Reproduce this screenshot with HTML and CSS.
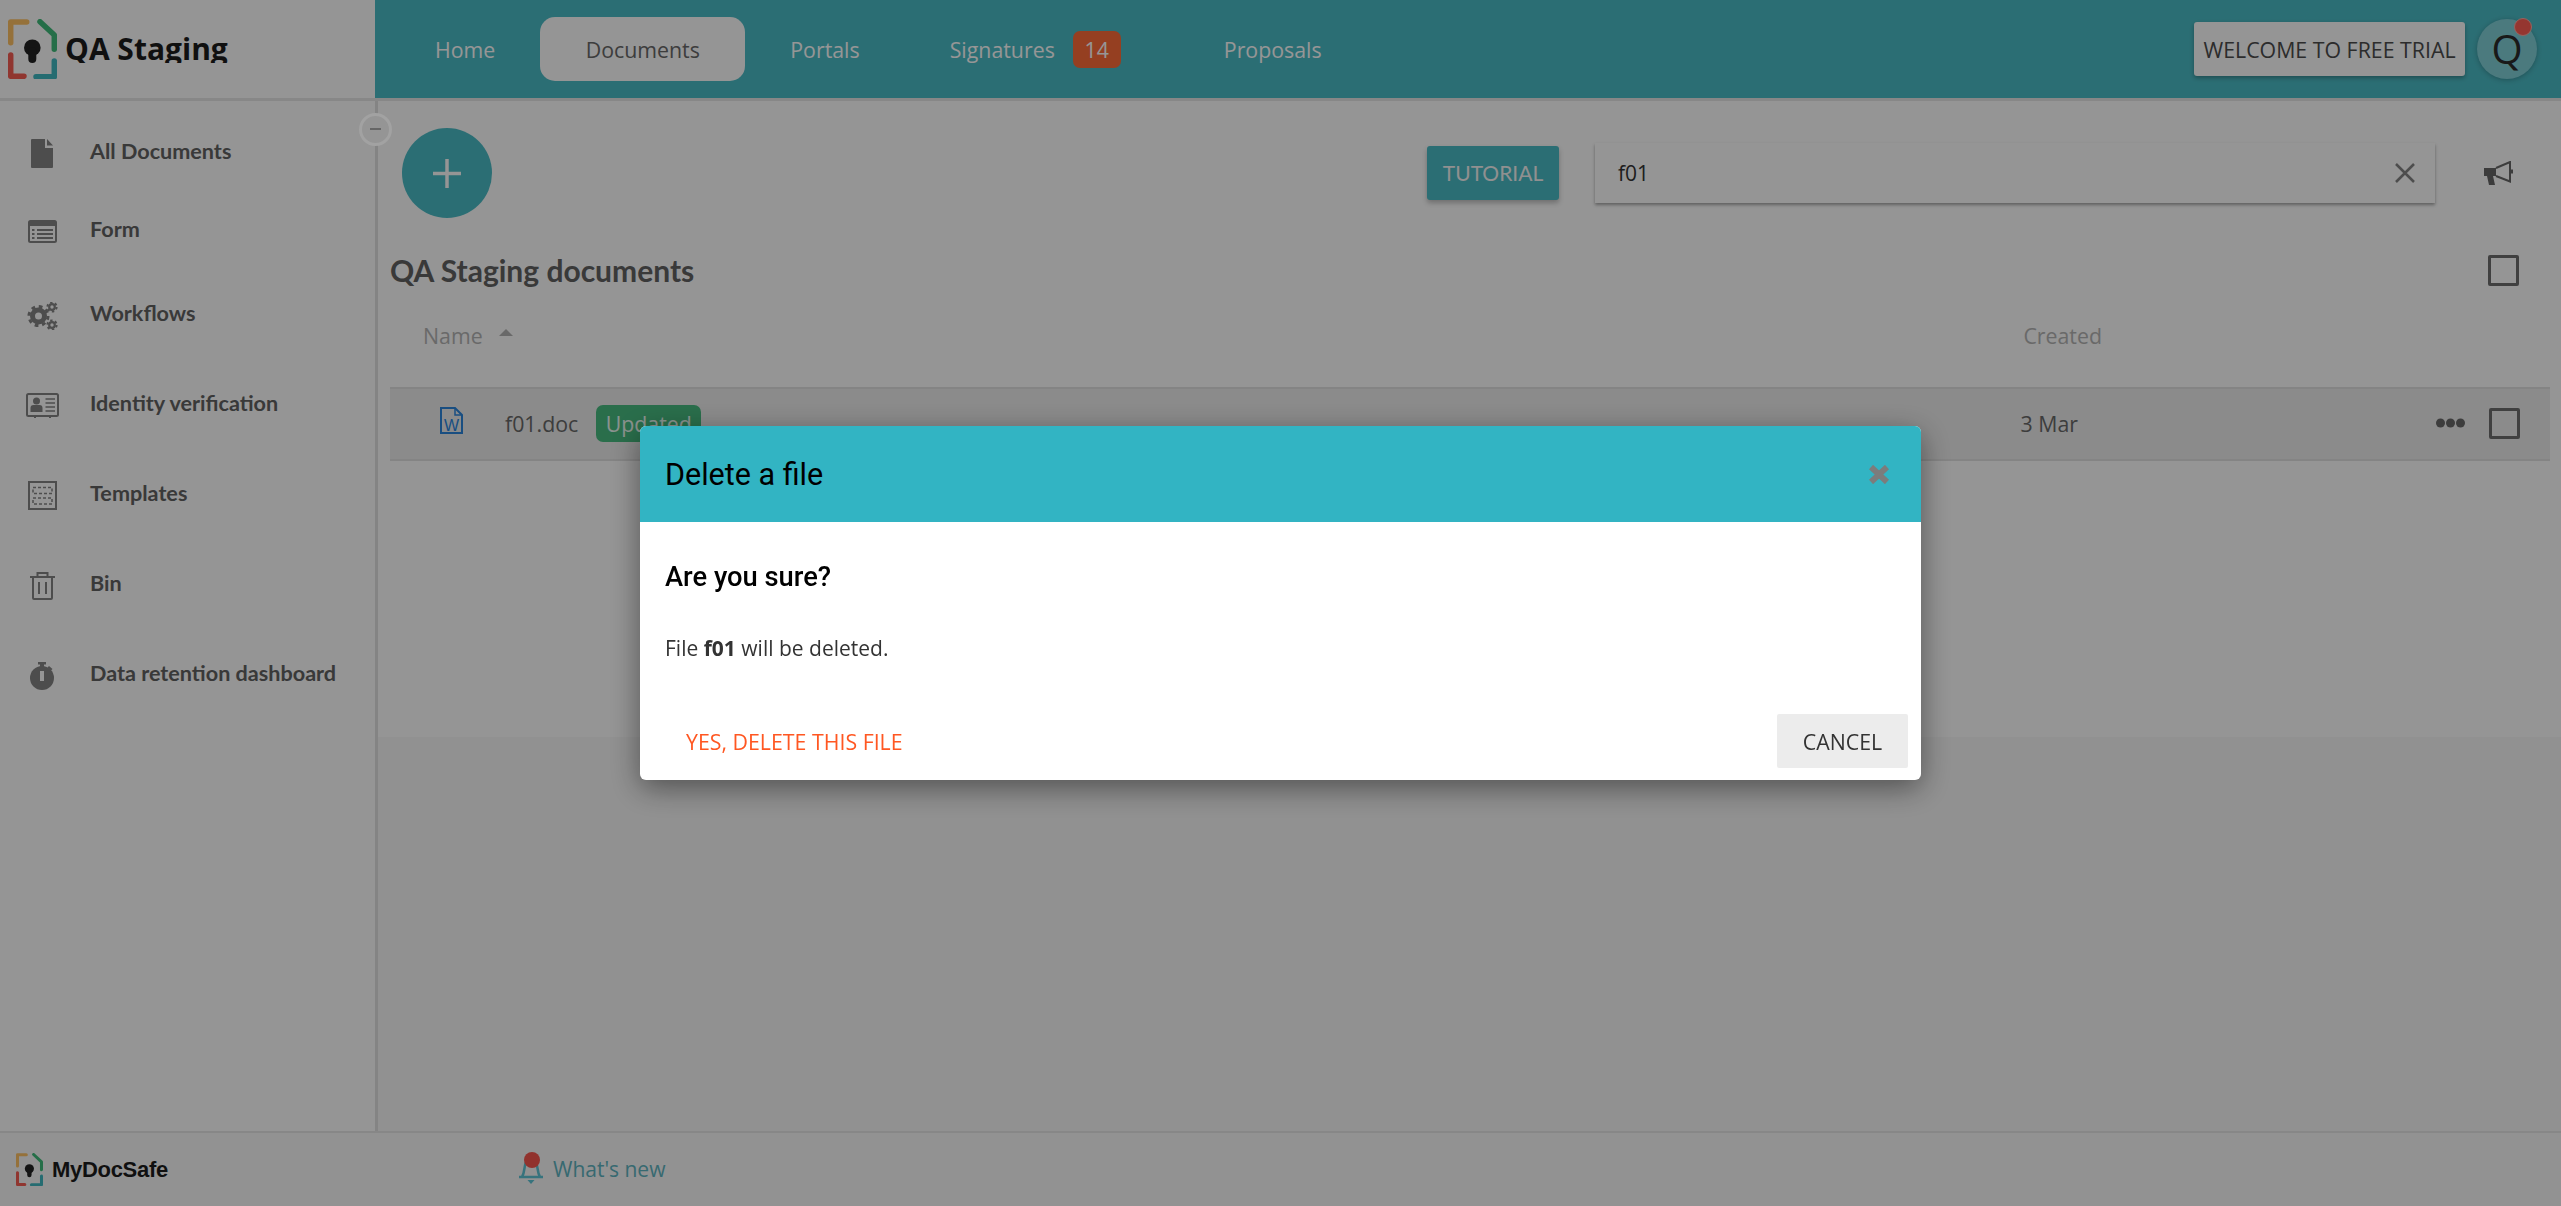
FILE: index.html
```html
<!DOCTYPE html>
<html lang="en">
<head>
<meta charset="utf-8">
<title>QA Staging documents</title>
<link rel="stylesheet" href="styles.css">
</head>
<body>
<div class="app">
  <header class="topbar">
    <div class="brand">
      <svg class="brand-logo" width="49" height="60" viewBox="0 0 49 60" fill="none" stroke-width="5.5" stroke-linecap="round" stroke-linejoin="round">
        <path d="M2.7 23.7V3H18.7" stroke="#f8bd62"/>
        <path d="M32 2.7L46.3 16V30.3" stroke="#3fb878"/>
        <path d="M2.7 36V57.3H16" stroke="#f05a50"/>
        <path d="M28 57.7H46.3V42" stroke="#3fb4bd"/>
        <circle cx="24.3" cy="28.7" r="8.3" fill="#222" stroke="none"/>
        <path d="M24.3 32V40" stroke="#222" stroke-width="8"/>
      </svg>
      <span class="brand-name">QA Staging</span>
    </div>
    <nav class="nav">
      <a class="nav-item nav-home">Home</a>
      <a class="nav-item nav-active">Documents</a>
      <a class="nav-item nav-portals">Portals</a>
      <a class="nav-item nav-signatures">Signatures</a>
      <span class="nav-badge">14</span>
      <a class="nav-item nav-proposals">Proposals</a>
      <button class="trial-btn">WELCOME TO FREE TRIAL</button>
      <div class="avatar">Q<span class="avatar-dot"></span></div>
    </nav>
  </header>

  <div class="middle">
    <aside class="sidebar">
      <span class="collapse"></span>
      <a class="side-item side-short">
        <span class="side-icon"><svg width="22" height="29" viewBox="0 0 22 29" fill="#808080"><path d="M1 0H14V9H22V28a1 1 0 0 1-1 1H1a1 1 0 0 1-1-1V1a1 1 0 0 1 1-1z"/><path d="M16 0L22 6.500H16z"/></svg></span>
        All Documents
      </a>
      <a class="side-item side-short">
        <span class="side-icon"><svg width="29" height="23" viewBox="0 0 29 23" fill="none" stroke="#808080"><rect x="1" y="1" width="27" height="21" rx="1.500" stroke-width="2"/><path d="M1 3.500H28" stroke-width="5"/><path d="M9 10H25M9 14H25M9 18H25M4 10H6.500M4 14H6.500M4 18H6.500" stroke-width="2"/></svg></span>
        Form
      </a>
      <a class="side-item">
        <span class="side-icon"><svg width="31" height="28" viewBox="0 0 31 28" fill="none" stroke="#808080"><circle cx="11.500" cy="14" r="6" stroke-width="5"/><circle cx="11.500" cy="14" r="9.500" stroke-width="3" stroke-dasharray="3.700 3.760"/><circle cx="25" cy="5" r="2.800" stroke-width="2.200"/><circle cx="25" cy="5" r="4.600" stroke-width="2" stroke-dasharray="2.400 2.420"/><circle cx="25" cy="23" r="2.800" stroke-width="2.200"/><circle cx="25" cy="23" r="4.600" stroke-width="2" stroke-dasharray="2.400 2.420"/></svg></span>
        Workflows
      </a>
      <a class="side-item">
        <span class="side-icon"><svg width="33" height="25" viewBox="0 0 33 25" fill="none" stroke="#808080"><rect x="1" y="1" width="31" height="22" rx="1.500" stroke-width="2"/><circle cx="10.500" cy="8" r="3.500" fill="#808080" stroke="none"/><path d="M4.500 19V15a3 3 0 0 1 3-3h6a3 3 0 0 1 3 3v4z" fill="#808080" stroke="none"/><path d="M19.500 6H29M19.500 10H29M19.500 14H29M19.500 18H29" stroke-width="1.500"/><path d="M9 23V25M24 23V25" stroke-width="2"/></svg></span>
        Identity verification
      </a>
      <a class="side-item">
        <span class="side-icon"><svg width="29" height="29" viewBox="0 0 29 29" fill="none" stroke="#808080"><rect x="1" y="1" width="27" height="27" stroke-width="2"/><rect x="5" y="6.500" width="19" height="6" stroke-width="1.500" stroke-dasharray="3 2"/><rect x="5" y="17" width="19" height="6" stroke-width="1.500" stroke-dasharray="3 2"/></svg></span>
        Templates
      </a>
      <a class="side-item">
        <span class="side-icon"><svg width="25" height="28" viewBox="0 0 25 28" fill="none" stroke="#808080" stroke-width="2"><path d="M3 5V26a1 1 0 0 0 1 1H21a1 1 0 0 0 1-1V5"/><path d="M0 5H25"/><path d="M7.500 4V1H17.500V4"/><path d="M9 10V22M16 10V22"/></svg></span>
        Bin
      </a>
      <a class="side-item">
        <span class="side-icon"><svg width="24" height="28" viewBox="0 0 24 28" fill="#808080"><circle cx="12" cy="16" r="12"/><path d="M8 0H16V2.500H14V5H10V2.500H8z"/><path d="M19 4L22.500 7L21 8.500L17.500 5.500z"/><rect x="10" y="9" width="4" height="10" fill="#f8f8f8"/></svg></span>
        Data retention dashboard
      </a>
    </aside>

    <main class="main">
      <div class="toolbar">
        <button class="add-btn" aria-label="Add"><svg width="28" height="29" viewBox="0 0 28 29" stroke="#f8f8f8" stroke-width="3.500"><path d="M14 0V29M0 14.500H28"/></svg></button>
        <button class="tutorial-btn">TUTORIAL</button>
        <div class="search">
          <span class="search-value">f01</span>
          <svg width="20" height="20" viewBox="0 0 20 20" stroke="#808080" stroke-width="2.500"><path d="M1 1L19 19M19 1L1 19"/></svg>
        </div>
        <svg class="megaphone" width="29" height="25" viewBox="0 0 29 25" fill="none"><path d="M0 7H12V15H9L11 24H5L3 15H0z" fill="#646464"/><path d="M12 7L26 1V20.500L12 15" stroke="#646464" stroke-width="2"/><rect x="26" y="8.500" width="3" height="4" fill="#646464"/></svg>
      </div>

      <section class="docs">
        <div class="docs-title">
          <h1>QA Staging documents</h1>
          <span class="check"></span>
        </div>
        <div class="table-head">
          <span class="th-name">Name</span>
          <span class="sort-caret"></span>
          <span class="th-created">Created</span>
        </div>
        <div class="row">
          <svg class="word-icon" width="23" height="27" viewBox="0 0 23 27" fill="none" stroke="#2a82d8" stroke-width="2"><path d="M1 1H15L22 8V26H1z"/><path d="M15 1V8H22" stroke-width="1.500"/><text x="11.500" y="23.500" text-anchor="middle" class="word-letter">W</text></svg>
          <span class="file-name">f01.doc</span>
          <span class="file-badge">Updated</span>
          <span class="file-date">3 Mar</span>
          <svg class="dots" width="29" height="10" viewBox="0 0 29 10" fill="#666"><circle cx="4.500" cy="5" r="4.500"/><circle cx="14.500" cy="5" r="4.500"/><circle cx="24.500" cy="5" r="4.500"/></svg>
          <span class="check check-row"></span>
        </div>
      </section>
      <div class="lower"></div>
    </main>
  </div>

  <footer class="footer">
    <svg width="27" height="33" viewBox="0 0 49 60" fill="none" stroke-width="5.500" stroke-linecap="round" stroke-linejoin="round">
      <path d="M2.700 23.700V3H18.700" stroke="#f8bd62"/>
      <path d="M32 2.700L46.300 16V30.300" stroke="#3fb878"/>
      <path d="M2.700 36V57.300H16" stroke="#f05a50"/>
      <path d="M28 57.700H46.300V42" stroke="#3fb4bd"/>
      <circle cx="24.300" cy="28.700" r="8.300" fill="#222" stroke="none"/>
      <path d="M24.300 32V40" stroke="#222" stroke-width="8"/>
    </svg>
    <span class="footer-name">MyDocSafe</span>
    <svg class="bell" width="26" height="33" viewBox="0 0 26 33" fill="none"><path d="M1 25H25M4 25C7 20 6 14 8 10C9 8 11 7 13 7C15 7 17 8 18 10C20 14 19 20 22 25" stroke="#5cc0d0" stroke-width="2.500"/><path d="M9.500 28H16.500L13 32z" fill="#5cc0d0"/><circle cx="14" cy="8" r="8" fill="#f2544c"/></svg>
    <span class="whats-new">What's new</span>
  </footer>
</div>

<div class="backdrop"></div>

<div class="modal" role="dialog">
  <div class="modal-head">
    <h2>Delete a file</h2>
    <svg width="20" height="19" viewBox="0 0 20 19" stroke="#7c7c7c" stroke-width="6"><path d="M2 2L18 17M18 2L2 17"/></svg>
  </div>
  <div class="modal-body">
    <h3>Are you sure?</h3>
    <p>File <strong>f01</strong> will be deleted.</p>
  </div>
  <div class="modal-foot">
    <button class="btn-delete">YES, DELETE THIS FILE</button>
    <button class="btn-cancel">CANCEL</button>
  </div>
</div>
</body>
</html>
```
FILE: styles.css
```css
* { box-sizing: border-box; }
html, body { margin: 0; height: 100%; overflow: hidden; }
body { font-family: "Open Sans", sans-serif; font-size: 21.33px; color: #555; background: #f8f8f8; }
button { font: inherit; border: 0; padding: 0; cursor: pointer; }
h1, h2, h3, p { margin: 0; font-weight: normal; }

.app { height: 1206px; display: flex; flex-direction: column; }

/* Top bar */
.topbar { flex: 0 0 101px; display: flex; border-bottom: 3px solid #e2e2e2; background: #f8f8f8; }
.brand { flex: 0 0 375px; display: flex; align-items: center; padding-left: 8px; gap: 8px; }
.brand-name { font-weight: 700; font-size: 30px; line-height: 40px; height: 34px; overflow: hidden; color: #1c1c1c; margin-bottom: 6px; white-space: nowrap; }
.nav { flex: 1; display: flex; align-items: center; background: #49b7c1; color: #fafafa; padding-right: 24px; }
.nav-item { white-space: nowrap; line-height: 27px; }
.nav-home { margin-left: 60px; }
.nav-active { margin-left: 45px; width: 205px; height: 64px; border-radius: 15px; background: #f8f8f8; color: #666; display: flex; align-items: center; justify-content: center; }
.nav-portals { margin-left: 45px; }
.nav-signatures { margin-left: 90px; }
.nav-badge { margin-left: 18px; width: 48px; height: 37px; border-radius: 7px; background: #f86a38; color: #fafafa; display: flex; align-items: center; justify-content: center; }
.nav-proposals { margin-left: 103px; }
.trial-btn { margin-left: auto; width: 271px; height: 54px; border-radius: 3px; background: #f8f8f8; color: #4a4a4a; box-shadow: 0 2px 4px rgba(0,0,0,.3); white-space: nowrap; }
.avatar { position: relative; margin-left: 12px; width: 60px; height: 60px; border-radius: 50%; background: #7dcbd3; color: #2a2a2a; font-size: 40px; line-height: 60px; text-align: center; box-shadow: 0 1px 5px rgba(0,0,0,.25); }
.avatar-dot { position: absolute; top: -1px; right: 5px; width: 18px; height: 18px; border-radius: 50%; background: #f85a50; border: 1px solid #f8a8a0; }

/* Middle */
.middle { flex: 1; display: flex; min-height: 0; }
.sidebar { position: relative; flex: 0 0 378px; padding-top: 11px; border-right: 3px solid #dcdcdc; background: #f8f8f8; }
.collapse { position: absolute; z-index: 11; top: 112px; right: -17px; width: 33px; height: 33px; border-radius: 50%; border: 3px solid #a2a2a2; background: #959595; margin-top: -100px; }
.collapse::after { content: ""; position: absolute; left: 8px; top: 12px; width: 11px; height: 2px; background: #666; }
.side-item { display: flex; align-items: center; height: 90px; font-family: Lato, sans-serif; font-weight: 700; font-size: 21.6px; color: #606060; }
.side-short { height: 78px; }
.side-icon { flex: 0 0 90px; display: flex; justify-content: center; padding-right: 6px; margin-top: 5px; }
.side-icon svg { display: block; }

/* Main */
.main { flex: 1; display: flex; flex-direction: column; min-width: 0; background: #f8f8f8; }
.toolbar { display: flex; align-items: center; padding: 27px 48px 0 24px; }
.add-btn { width: 90px; height: 90px; border-radius: 50%; background: #49b7c1; display: flex; align-items: center; justify-content: center; }
.tutorial-btn { margin-left: auto; width: 132px; height: 54px; padding-bottom: 2px; border-radius: 3px; background: #49b7c1; color: #f0f0f0; font-family: Lato, sans-serif; font-size: 21px; box-shadow: 0 3px 5px rgba(0,0,0,.25); }
.search { margin-left: 36px; width: 840px; height: 60px; display: flex; align-items: center; justify-content: space-between; padding: 0 20px 0 23px; background: #f8f8f8; box-shadow: 0 2px 3px rgba(0,0,0,.35); }
.search-value { color: #333; font-size: 21px; }
.megaphone { margin-left: 49px; }

.docs { padding: 32px 11px 0 12px; }
.docs-title { display: flex; align-items: center; justify-content: space-between; height: 40px; }
.docs-title h1 { font-family: Lato, sans-serif; font-weight: 700; font-size: 30px; color: #606060; }
.check { width: 31px; height: 31px; border: 3px solid #6c6c6c; border-radius: 2px; margin-right: 31px; }
.check-row { margin: 0 0 0 24px; }
.table-head { display: flex; align-items: center; height: 97px; padding: 0 0 6px 33px; color: #b0b0b0; }
.sort-caret { margin: 0 0 6px 16px; border: 7px solid transparent; border-top: 0; border-bottom: 7px solid #b0b0b0; }
.th-created { margin-left: auto; margin-right: 448px; }
.row { display: flex; align-items: center; height: 74px; padding: 0 30px 2px 50px; background: #e8e8e8; border-top: 2px solid #dcdcdc; border-bottom: 2px solid #dcdcdc; color: #666; }
.word-icon { margin-top: -6px; }
.word-letter { font-family: "Liberation Sans", sans-serif; font-size: 16px; fill: #2a82d8; stroke: none; }
.file-name { margin-left: 42px; }
.file-badge { margin-left: 18px; width: 105px; height: 37px; border-radius: 7px; background: #46b87e; color: #e8f4ee; display: flex; align-items: center; justify-content: center; }
.file-date { margin-left: auto; margin-right: 358px; }
.dots { flex: none; }
.lower { flex: 1; margin-top: 276px; background: #f2f2f2; }

/* Footer */
.footer { flex: 0 0 75px; display: flex; align-items: center; padding-left: 16px; background: #f3f3f3; border-top: 2px solid #e2e2e2; }
.footer-name { margin-left: 9px; width: 116px; font-family: "Liberation Sans", sans-serif; font-weight: 700; font-size: 22px; letter-spacing: -.3px; color: #1c1c1c; white-space: nowrap; }
.bell { margin-left: 350px; margin-top: -2px; }
.whats-new { margin-left: 9px; color: #5cb0bc; margin-top: -2px; font-size: 21px; }

/* Dialog layer */
.backdrop { position: fixed; inset: 0; z-index: 10; background: rgba(0,0,0,.4); }
.modal { position: fixed; z-index: 11; left: 640px; top: 426px; width: 1281px; height: 354px; border-radius: 6px; overflow: hidden; background: #fff; box-shadow: 0 8px 30px rgba(0,0,0,.45); display: flex; flex-direction: column; }
.modal-head { flex: 0 0 96px; display: flex; align-items: center; justify-content: space-between; padding: 0 32px 0 25px; background: #32b4c3; }
.modal-head h2 { font-family: Roboto, sans-serif; font-size: 30.5px; color: #000; }
.modal-body { flex: 1; padding: 38px 25px 0; }
.modal-body h3 { font-family: Roboto, sans-serif; font-weight: 500; font-size: 27.3px; line-height: 34px; color: #000; }
.modal-body p { margin-top: 40px; line-height: 28px; font-size: 21px; color: #333; }
.modal-foot { display: flex; align-items: center; justify-content: space-between; padding: 0 13px 12px 46px; }
.btn-delete { background: none; color: #ff5722; }
.btn-cancel { width: 131px; height: 54px; background: #ececec; color: #333; border-radius: 2px; }
```
